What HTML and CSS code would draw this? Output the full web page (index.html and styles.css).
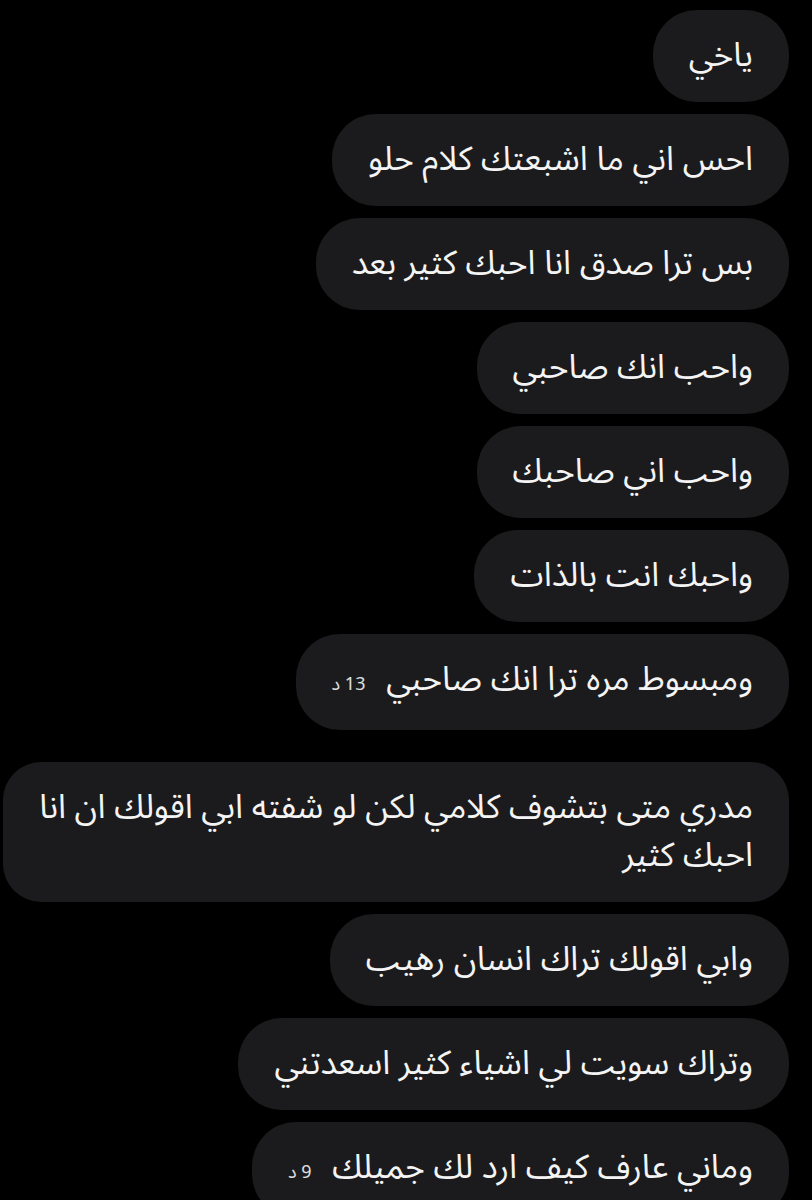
FILE: index.html
```html
<!DOCTYPE html>
<html lang="ar" dir="rtl">
<head>
    <meta charset="UTF-8">
    <meta name="viewport" content="width=device-width, initial-scale=1.0">
    <title>Messages</title>
    <link rel="stylesheet" href="styles.css">
</head>
<body>
    <div class="thread">
        <div class="bubble">ياخي</div>
        <div class="bubble">احس اني ما اشبعتك كلام حلو</div>
        <div class="bubble">بس ترا صدق انا احبك كثير بعد</div>
        <div class="bubble">واحب انك صاحبي</div>
        <div class="bubble">واحب اني صاحبك</div>
        <div class="bubble">واحبك انت بالذات</div>
        <div class="bubble timed">ومبسوط مره ترا انك صاحبي <span class="time">13 د</span></div>
        <div class="bubble long">مدري متى بتشوف كلامي لكن لو شفته ابي اقولك ان انا<br>احبك كثير</div>
        <div class="bubble">وابي اقولك تراك انسان رهيب</div>
        <div class="bubble">وتراك سويت لي اشياء كثير اسعدتني</div>
        <div class="bubble timed">وماني عارف كيف ارد لك جميلك <span class="time">9 د</span></div>
    </div>
</body>
</html>
```

FILE: styles.css
```css
/* Base */
body {
    margin: 0;
    padding: 0;
    background-color: #000;
    color: #f4f4f4;
    font-family: "Noto Sans Arabic", "DejaVu Sans", sans-serif;
    overflow: hidden;
}

/* Message list */
.thread {
    display: flex;
    flex-direction: column;
    align-items: flex-start; /* rtl: start is the right side */
    gap: 12px;
    padding: 10px 23px 0 0;
}

.bubble {
    padding: 22px 36px;
    background-color: #1b1b1d;
    border-radius: 44px;
    font-size: 33.5px;
    line-height: 48px;
}

/* wrapped message runs off the left edge like the screenshot */
.long {
    white-space: nowrap;
    border-radius: 38px;
}

.timed {
    margin-bottom: 20px;
}

.time {
    font-size: 18px;
    color: #e0e0e0;
    margin-right: 12px;
}
```
